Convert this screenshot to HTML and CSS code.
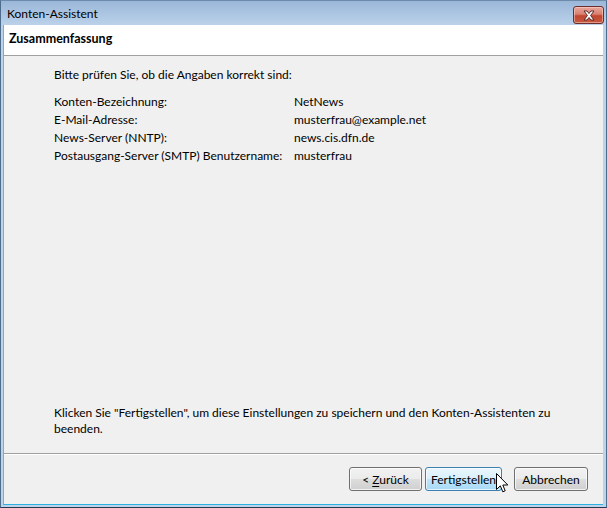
FILE: index.html
```html
<!DOCTYPE html>
<html lang="de">
<head>
<meta charset="utf-8">
<title>Konten-Assistent</title>
<link rel="stylesheet" href="styles.css">
</head>
<body>
<div class="window">
  <div class="titlebar">
    <span class="title">Konten-Assistent</span>
    <button class="close" aria-label="Schließen">
      <svg width="14" height="11" viewBox="0 0 14 11">
        <path d="M2 1 L5 1 L7 3.5 L9 1 L12 1 L8.6 5.5 L12 10 L9 10 L7 7.5 L5 10 L2 10 L5.4 5.5 Z" fill="#fff" stroke="#5a2a2a" stroke-width="1" stroke-linejoin="round"/>
      </svg>
    </button>
  </div>
  <div class="client">
    <div class="header">Zusammenfassung</div>
    <div class="main">
      <p class="intro">Bitte prüfen Sie, ob die Angaben korrekt sind:</p>
      <div class="rows">
        <span>Konten-Bezeichnung:</span><span>NetNews</span>
        <span>E-Mail-Adresse:</span><span>musterfrau@example.net</span>
        <span>News-Server (NNTP):</span><span>news.cis.dfn.de</span>
        <span>Postausgang-Server (SMTP) Benutzername:</span><span>musterfrau</span>
      </div>
      <p class="note">Klicken Sie "Fertigstellen", um diese Einstellungen zu speichern und den Konten-Assistenten zu beenden.</p>
    </div>
    <div class="buttons">
      <button class="btn back">&lt; <u>Z</u>urück</button>
      <button class="btn primary">Fertigstellen</button>
      <button class="btn cancel">Abbrechen</button>
      <svg class="cursor" width="13" height="21" viewBox="0 0 13 21">
        <path d="M0.5 0.5 L0.5 16.5 L4.3 12.8 L6.8 18.8 L9.2 17.8 L6.8 12 L11.8 12 Z" fill="#fff" stroke="#000" stroke-width="1" stroke-linejoin="miter"/>
      </svg>
    </div>
  </div>
</div>
</body>
</html>
```

FILE: styles.css
```css
html, body {
  margin: 0;
  padding: 0;
  background: #bcd3ea;
}

body {
  font-family: Lato, "Noto Sans", sans-serif;
  font-size: 12px;
  color: #000;
}

.window {
  width: 607px;
  height: 508px;
  box-sizing: border-box;
  display: flex;
  flex-direction: column;
  border: 1px solid #4e6c8e;
  border-top-color: #6e8aaa;
  border-bottom-color: #243a52;
  background: linear-gradient(#9bb7d8 0px, #a8c2e0 10px, #bcd3ea 25px, #bcd3ea 100%);
  padding: 0 3px 2px 2px;
}

.titlebar {
  height: 24px;
  flex: none;
  display: flex;
  align-items: center;
  justify-content: space-between;
  padding-left: 4px;
}

.title {
  line-height: 16px;
  margin-top: 1px;
}

.close {
  width: 31px;
  height: 18px;
  margin-right: -1px;
  margin-top: 4px;
  box-sizing: border-box;
  border: 1px solid #6a2e2e;
  border-radius: 3px;
  background: linear-gradient(#e8a89c 0%, #d9806f 45%, #c2452f 55%, #c65a40 100%);
  box-shadow: inset 0 0 0 1px rgba(255, 220, 210, 0.5);
  padding: 0;
  display: flex;
  align-items: center;
  justify-content: center;
}

.close svg {
  display: block;
}

.client {
  flex: 1;
  display: flex;
  flex-direction: column;
  background: #f0f0f0;
  border-left: 1px solid #8aa6c4;
  border-bottom: 1px solid #2bb0e0;
}

.header {
  height: 31px;
  flex: none;
  background: #fff;
  border-bottom: 1px solid #a0a0a0;
  box-sizing: border-box;
  font-weight: bold;
  font-size: 12.5px;
  line-height: 16px;
  padding: 6px 0 0 5px;
}

.main {
  flex: 1;
  display: flex;
  flex-direction: column;
  padding: 10px 40px 16px 50px;
  border-bottom: 1px solid #a0a0a0;
  box-shadow: 0 1px 0 #fff;
}

.intro {
  margin: 0;
  line-height: 18px;
}

.rows {
  margin-top: 9px;
  display: grid;
  grid-template-columns: 240px auto;
  grid-auto-rows: 18px;
  line-height: 18px;
  white-space: nowrap;
}

.note {
  margin: auto 0 0 0;
  line-height: 16px;
}

.buttons {
  height: 50px;
  flex: none;
  display: flex;
  align-items: flex-start;
  justify-content: flex-end;
  padding: 13px 15px 0 0;
  box-sizing: border-box;
  position: relative;
}

.btn {
  height: 24px;
  box-sizing: border-box;
  font-family: inherit;
  font-size: 12px;
  color: #000;
  border: 1px solid #707070;
  border-radius: 3px;
  background: linear-gradient(#f2f2f2 0%, #ebebeb 48%, #dddddd 52%, #cfcfcf 100%);
  box-shadow: inset 0 0 0 1px rgba(255, 255, 255, 0.7);
  padding: 0;
}

.back {
  width: 73px;
}

.back u {
  text-decoration: underline;
  text-underline-offset: 2px;
}

.primary {
  width: 77px;
  margin-left: 3px;
  border-color: #3c7fb1;
  background: linear-gradient(#eaf6fd 0%, #d9f0fc 48%, #bee6fd 52%, #a7d9f5 100%);
}

.cancel {
  width: 74px;
  margin-left: 12px;
}

.cursor {
  position: absolute;
  left: 492px;
  top: 19px;
}
```
